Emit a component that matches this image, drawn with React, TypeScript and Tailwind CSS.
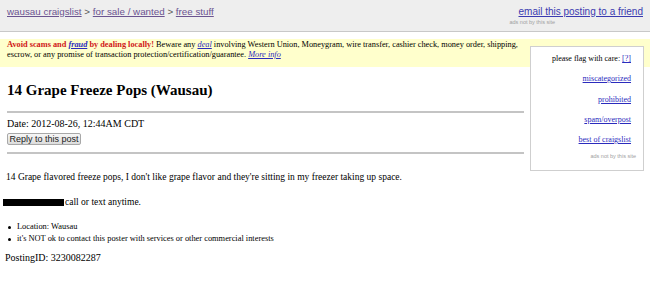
import React from "react";

const serif = "font-['Liberation_Serif','Times_New_Roman',serif]";
const sans = "font-['Liberation_Sans',Arial,sans-serif]";

export default function App() {
  return (
    <div className={`relative w-[650px] h-[281px] bg-white overflow-hidden text-black ${serif}`}>
      {/* header */}
      <div className={`h-[32px] bg-[#eeeeee] border-b border-[#c8c8c8] flex justify-between px-[7px] ${sans}`}>
        <div className="pt-[6px] text-[9.8px] leading-[12px] text-[#6b5490]">
          <a className="underline">wausau craigslist</a>
          <span className="text-[#555]"> &gt; </span>
          <a className="underline">for sale / wanted</a>
          <span className="text-[#555]"> &gt; </span>
          <a className="underline">free stuff</a>
        </div>
        <div className="flex flex-col items-end pt-[6px]">
          <a className="underline text-[10px] leading-[12px] text-[#3a3ab0]">email this posting to a friend</a>
          <div className="text-[5.5px] leading-[7px] text-[#a0a0a0] pr-[88px] mt-[1px]">ads not by this site</div>
        </div>
      </div>

      {/* warning */}
      <div className="mt-[7px] h-[28px] bg-[#ffffcc] pl-[7px] pt-[1px] text-[8.3px] leading-[10px]">
        <div className="whitespace-nowrap">
          <b className="text-[#d01818]">Avoid scams and </b>
          <b className="italic underline text-[#2b2bbd]">fraud</b>
          <b className="text-[#d01818]"> by dealing locally!</b> Beware any{" "}
          <i className="underline text-[#2b2bbd]">deal</i> involving Western Union, Moneygram, wire transfer, cashier check, money order, shipping,
        </div>
        <div className="whitespace-nowrap">
          escrow, or any promise of transaction protection/certification/guarantee.{" "}
          <i className="underline text-[#2b2bbd]">More info</i>
        </div>
      </div>

      {/* flag box */}
      <div className="absolute left-[530px] top-[46px] w-[114px] h-[125px] bg-white border border-[#cfcfcf] text-right pr-[12px] text-[8px]">
        <div className="mt-[6px] leading-[12px]">
          please flag with care: <a className="underline text-[#2b2bbd]">[?]</a>
        </div>
        <div className="mt-[8px] leading-[12px]"><a className="underline text-[#2b2bbd]">miscategorized</a></div>
        <div className="mt-[9px] leading-[12px]"><a className="underline text-[#2b2bbd]">prohibited</a></div>
        <div className="mt-[8px] leading-[12px]"><a className="underline text-[#2b2bbd]">spam/overpost</a></div>
        <div className="mt-[8px] leading-[12px]"><a className="underline text-[#2b2bbd]">best of craigslist</a></div>
        <div className={`mt-[7px] leading-[7px] text-[5.5px] text-[#a0a0a0] mr-[-5px] ${sans}`}>ads not by this site</div>
      </div>

      {/* main */}
      <div className="pl-[7px]">
        <h2 className="mt-[14px] text-[15px] leading-[18px] font-bold">14 Grape Freeze Pops (Wausau)</h2>
        <div className="mt-[12px] w-[517px] h-[2px] bg-[#c4c4c4]" />
        <div className="mt-[5px] text-[10px] leading-[12px]">Date: 2012-08-26, 12:44AM CDT</div>
        <button
          className={`mt-[3px] h-[12px] w-[74px] flex items-center justify-center rounded-[2px] border border-[#a8a8a8] bg-gradient-to-b from-[#f7f7f7] to-[#dcdcdc] text-[9px] leading-[10px] text-[#222] ${sans}`}
        >
          Reply to this post
        </button>
        <div className="mt-[7px] w-[517px] h-[2px] bg-[#c4c4c4]" />
      </div>

      <div className="pl-[6px] mt-[17px] text-[9.5px] leading-[12px]">
        14 Grape flavored freeze pops, I don't like grape flavor and they're sitting in my freezer taking up space.
      </div>
      <div className="mt-[13px] flex items-center pl-[3px] text-[9.5px] leading-[12px]">
        <span className="inline-block w-[61px] h-[7px] bg-black" />
        <span className="ml-[1px]">call or text anytime.</span>
      </div>
      <ul className="mt-[13px] text-[8.4px] leading-[12px] pl-[8px]">
        <li className="flex items-center">
          <span className="w-[3px] h-[3px] rounded-full bg-black mr-[6px]" />
          Location: Wausau
        </li>
        <li className="flex items-center">
          <span className="w-[3px] h-[3px] rounded-full bg-black mr-[6px]" />
          it's NOT ok to contact this poster with services or other commercial interests
        </li>
      </ul>
      <div className="mt-[7px] pl-[5px] text-[10px] leading-[12px]">PostingID: 3230082287</div>
    </div>
  );
}
